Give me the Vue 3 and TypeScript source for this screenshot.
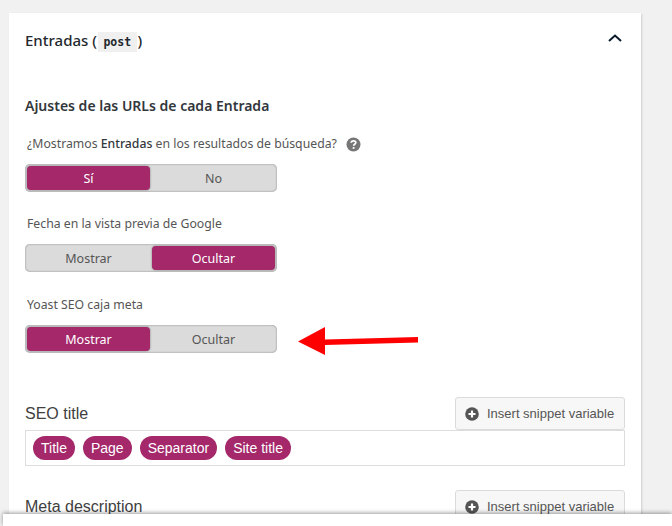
<script setup lang="ts">
const toggles = [
  { label: 'Fecha en la vista previa de Google', options: ['Mostrar', 'Ocultar'], active: 1 },
  { label: 'Yoast SEO caja meta', options: ['Mostrar', 'Ocultar'], active: 0 },
]
const pills = ['Title', 'Page', 'Separator', 'Site title']
</script>

<template>
  <div class="page">
    <section class="card">
      <header class="head">
        <h2>Entradas (<code>post</code>)</h2>
        <svg class="chev" width="16" height="10" viewBox="0 0 16 10">
          <path d="M2 8 L8 2.5 L14 8" fill="none" stroke="#0a1a2a" stroke-width="2" />
        </svg>
      </header>

      <h3>Ajustes de las URLs de cada Entrada</h3>

      <div class="field first">
        <div class="label">
          <span>¿Mostramos <b>Entradas</b> en los resultados de búsqueda?</span>
          <svg class="help" width="15" height="15" viewBox="0 0 15 15">
            <circle cx="7.5" cy="7.5" r="7" fill="#767676" />
            <path d="M5.2 5.8 C5.3 3.2 9.8 3.2 9.8 5.6 C9.8 7.2 7.6 7.2 7.6 8.8" fill="none" stroke="#fff" stroke-width="1.7" />
            <rect x="6.7" y="10" width="1.8" height="1.8" fill="#fff" />
          </svg>
        </div>
        <div class="toggle">
          <span class="seg on">Sí</span>
          <span class="seg">No</span>
        </div>
      </div>

      <div v-for="t in toggles" :key="t.label" class="field">
        <div class="label">{{ t.label }}</div>
        <div class="toggle">
          <span v-for="(o, i) in t.options" :key="o" class="seg" :class="{ on: i === t.active }">{{ o }}</span>
        </div>
      </div>

      <div class="editor title-editor">
        <div class="editor-head">
          <span class="editor-label">SEO title</span>
          <button class="insert">
            <svg width="14" height="14" viewBox="0 0 14 14">
              <circle cx="7" cy="7" r="6.8" fill="#555" />
              <path d="M7 3.5 V10.5 M3.5 7 H10.5" stroke="#fff" stroke-width="2.2" />
            </svg>
            Insert snippet variable
          </button>
        </div>
        <div class="input">
          <span v-for="p in pills" :key="p" class="pill">{{ p }}</span>
        </div>
      </div>

      <div class="editor meta-editor">
        <div class="editor-head">
          <span class="editor-label">Meta description</span>
          <button class="insert">
            <svg width="14" height="14" viewBox="0 0 14 14">
              <circle cx="7" cy="7" r="6.8" fill="#555" />
              <path d="M7 3.5 V10.5 M3.5 7 H10.5" stroke="#fff" stroke-width="2.2" />
            </svg>
            Insert snippet variable
          </button>
        </div>
      </div>
    </section>

    <!-- flecha roja de la anotación -->
    <svg class="arrow" width="124" height="30" viewBox="0 0 124 30">
      <path d="M0 14.5 L27 0 L27 12.5 L120 10 L120 15.5 L27 18 L27 28 Z" fill="#ff0000" />
    </svg>
    <div class="overlay"></div>
  </div>
</template>

<style scoped>
.page {
  position: relative;
  width: 672px;
  height: 526px;
  overflow: hidden;
  background: #f1f1f1;
  font-family: "Noto Sans", "Open Sans", sans-serif;
  color: #444;
}
.card {
  margin: 13px 0 0 9px;
  width: 632px;
  height: 560px;
  box-sizing: border-box;
  padding: 0 16px;
  background: #fff;
  box-shadow: 1px 1px 2px rgba(0, 0, 0, 0.15);
}
.head {
  display: flex;
  justify-content: space-between;
  align-items: center;
  height: 56px;
  padding-right: 2px;
}
.head h2 {
  margin: 0;
  font-size: 15px;
  font-weight: 500;
  color: #23282d;
}
.head code {
  display: inline-block;
  margin: 0 1px;
  font-family: "DejaVu Sans Mono", "Liberation Mono", monospace;
  font-size: 11.5px;
  font-weight: 700;
  line-height: 20px;
  color: #23282d;
  background: #f0f0f0;
  padding: 0 5.5px;
}
.chev {
  margin-top: -6px;
}
h3 {
  margin: 26px 0 0;
  font-size: 14px;
  line-height: 22px;
  font-weight: 600;
  color: #32373c;
}
.field {
  margin-top: 22px;
}
.field + .field + .field {
  margin-top: 23px;
}
.field.first {
  margin-top: 17px;
}
.label {
  display: flex;
  align-items: center;
  gap: 4px;
  font-size: 12.25px;
  line-height: 20px;
  padding-left: 2px;
  color: #555;
}
.label b {
  font-weight: 500;
  color: #32373c;
}
.help {
  margin-left: 5px;
}
.toggle {
  display: flex;
  gap: 2px;
  box-sizing: border-box;
  width: 252px;
  height: 28px;
  margin-top: 10px;
  padding: 2px;
  background: #dbdbdb;
  border-radius: 5px;
  box-shadow: inset 0 0 2px rgba(0, 0, 0, 0.45);
}
.seg {
  flex: 1;
  display: flex;
  align-items: center;
  justify-content: center;
  font-size: 12.5px;
  color: #555;
  border-radius: 4px;
}
.seg.on {
  background: #a4286a;
  color: #fff;
  box-shadow: 0 0 2px rgba(0, 0, 0, 0.5);
}
.editor-head {
  display: flex;
  justify-content: space-between;
  align-items: center;
}
.title-editor {
  margin-top: 44px;
}
.meta-editor {
  margin-top: 24px;
}
.editor-label {
  font-family: "Liberation Sans", Arial, sans-serif;
  font-size: 16px;
  color: #404040;
}
.insert {
  display: flex;
  align-items: center;
  gap: 8px;
  width: 170px;
  height: 33px;
  box-sizing: border-box;
  padding: 0 9px;
  border: 1px solid #dbdbdb;
  border-radius: 3px;
  background: #f7f7f7;
  font-family: "Liberation Sans", Arial, sans-serif;
  font-size: 13px;
  color: #555;
  white-space: nowrap;
}
.input {
  display: flex;
  align-items: center;
  gap: 8px;
  height: 36px;
  box-sizing: border-box;
  padding: 0 7px;
  border: 1px solid #ddd;
  font-family: "Liberation Sans", Arial, sans-serif;
}
.pill {
  padding: 0 8px;
  height: 24px;
  line-height: 24px;
  border-radius: 12px;
  background: #a4286a;
  color: #fff;
  font-size: 14px;
}
.arrow {
  position: absolute;
  left: 298px;
  top: 327px;
}
.overlay {
  position: absolute;
  left: 3px;
  right: 0;
  top: 514px;
  height: 12px;
  background: #fff;
  box-shadow: 0 -1px 4px rgba(0, 0, 0, 0.4);
}
</style>
